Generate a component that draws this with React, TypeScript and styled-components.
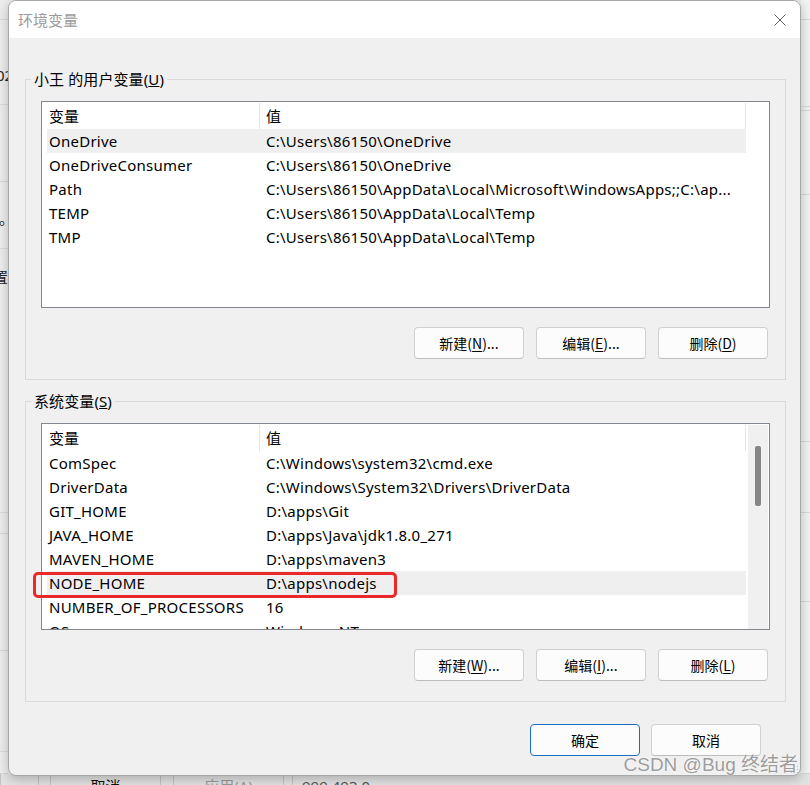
import styled, { createGlobalStyle } from "styled-components";

const GlobalStyle = createGlobalStyle`
  html, body {
    margin: 0;
    padding: 0;
  }
  body {
    width: 810px;
    height: 785px;
    overflow: hidden;
    background: #ececec;
    font-family: "Noto Sans", "Noto Sans CJK SC", sans-serif;
    color: #000;
  }
`;

const Desktop = styled.div`
  position: relative;
  width: 810px;
  height: 785px;
  overflow: hidden;
`;

/* ---------- window behind the dialog ---------- */

const BackWindow = styled.div`
  display: flex;
  flex-direction: column;
  width: 810px;
  height: 785px;
  background: #eeeeee;
`;

const BackTop = styled.div`
  display: flex;
  height: 774px;
  flex: none;
`;

const Strip = styled.div<{ $w: number; $bg: string }>`
  width: ${(p) => p.$w}px;
  flex: none;
  display: flex;
  flex-direction: column;
  background: ${(p) => p.$bg};
  overflow: hidden;
`;

const StripSeg = styled.div<{ $h: number }>`
  height: ${(p) => p.$h}px;
  flex: none;
  box-sizing: border-box;
  border-bottom: 1px solid #d9d9d9;
  white-space: nowrap;
  font-size: 15px;
  line-height: 20px;
  color: #222;
`;

const SegText = styled.div<{ $top: number; $left: number }>`
  padding-top: ${(p) => p.$top}px;
  margin-left: ${(p) => p.$left}px;
`;

const Filler = styled.div`
  flex: 1;
`;

const BackBottom = styled.div`
  display: flex;
  align-items: flex-start;
  height: 40px;
  flex: none;
  background: #e3e3e3;
  font-size: 15px;
  line-height: 20px;
`;

const BackCell = styled.div<{ $w: number; $color?: string }>`
  width: ${(p) => p.$w}px;
  flex: none;
  box-sizing: border-box;
  height: 40px;
  border-left: 1px solid #c4c4c4;
  text-align: center;
  padding-top: 2px;
  color: ${(p) => p.$color || "#111"};
`;

const BackGap = styled.div<{ $w: number }>`
  width: ${(p) => p.$w}px;
  flex: none;
  height: 40px;
  border-left: 1px solid #c4c4c4;
`;

const BackLabel = styled.div`
  padding: 2px 0 0 9px;
  color: #555;
  border-left: 1px solid #c4c4c4;
  height: 40px;
`;

/* ---------- the dialog ---------- */

const Dialog = styled.div`
  position: absolute;
  left: 8px;
  top: 0;
  width: 793px;
  height: 776px;
  box-sizing: border-box;
  border: 1px solid #a8a8a8;
  border-radius: 8px;
  background: #f0f0f0;
  box-shadow: 0 3px 12px rgba(0, 0, 0, 0.25);
  overflow: hidden;
  display: flex;
  flex-direction: column;
`;

const TitleBar = styled.div`
  height: 37px;
  flex: none;
  background: #fff;
  display: flex;
  align-items: center;
  justify-content: space-between;
  padding: 0 14px 0 9px;
`;

const Title = styled.div`
  font-family: "Noto Sans CJK SC", sans-serif;
  font-size: 15px;
  color: #9c9c9c;
`;

const Body = styled.div`
  flex: 1;
  display: flex;
  flex-direction: column;
  padding: 31px 14px 0 16px;
`;

const Group = styled.fieldset`
  margin: 0;
  padding: 12px 15px 20px 15px;
  border: 1px solid #d9d9d9;
  min-width: 0;
  & + & {
    margin-top: 11px;
  }
`;

const Legend = styled.legend`
  margin-left: -10px;
  padding: 0 3px;
  font-size: 15px;
  line-height: 20px;
  font-family: "Noto Sans", "Noto Sans CJK SC", sans-serif;
  letter-spacing: 0.1px;
`;

const List = styled.div`
  position: relative;
  height: 207px;
  box-sizing: border-box;
  border: 1px solid #828790;
  background: #fff;
  display: flex;
`;

const TableArea = styled.div`
  width: 704px;
  flex: none;
  overflow: hidden;
`;

const HeaderRow = styled.div`
  display: flex;
  height: 27px;
  font-size: 15px;
  line-height: 27px;
  font-family: "Noto Sans CJK SC", sans-serif;
`;

const HeaderCell = styled.div<{ $w: number; $pad: number }>`
  width: ${(p) => p.$w}px;
  flex: none;
  box-sizing: border-box;
  padding-left: ${(p) => p.$pad}px;
  position: relative;
  &::after {
    content: "";
    position: absolute;
    right: 0;
    top: 1px;
    bottom: 0;
    width: 1px;
    background: #e5e5e5;
  }
`;

const Row = styled.div<{ $selected?: boolean }>`
  display: flex;
  height: 24px;
  margin-left: 5px;
  font-size: 15px;
  line-height: 24px;
  letter-spacing: 0.25px;
  white-space: nowrap;
  background: ${(p) => (p.$selected ? "#efefef" : "transparent")};
`;

const Cell = styled.div<{ $w: number; $pad: number }>`
  width: ${(p) => p.$w}px;
  flex: none;
  box-sizing: border-box;
  padding-left: ${(p) => p.$pad}px;
  overflow: hidden;
`;

const ScrollTrack = styled.div<{ $show: boolean }>`
  width: 20px;
  margin: 1px 1px 0 2px;
  height: 204px;
  background: ${(p) => (p.$show ? "#f0f0f0" : "transparent")};
  display: flex;
  justify-content: center;
`;

const ScrollThumb = styled.div`
  width: 6px;
  height: 60px;
  margin-top: 21px;
  border-radius: 2px;
  background: #868686;
`;

const Marker = styled.div`
  position: absolute;
  left: -9px;
  top: 148px;
  width: 364px;
  height: 26px;
  box-sizing: border-box;
  border: 3px solid #ea2a2a;
  border-radius: 5px;
  pointer-events: none;
`;

const ButtonRow = styled.div<{ $gap: number; $right: number; $top: number }>`
  display: flex;
  justify-content: flex-end;
  gap: ${(p) => p.$gap}px;
  padding-right: ${(p) => p.$right}px;
  margin-top: ${(p) => p.$top}px;
`;

const Button = styled.button<{ $primary?: boolean }>`
  width: 110px;
  height: 32px;
  box-sizing: border-box;
  border: 1px solid ${(p) => (p.$primary ? "#1a6fc4" : "#d0d0d0")};
  border-bottom-color: ${(p) => (p.$primary ? "#1a6fc4" : "#bdbdbd")};
  border-radius: 4px;
  background: #fcfcfc;
  font-family: "Noto Sans CJK SC", sans-serif;
  font-size: 14px;
  color: #000;
  padding: 0;
  u {
    text-underline-offset: 2px;
  }
`;

const Watermark = styled.div`
  position: absolute;
  right: 12px;
  bottom: 9px;
  font-family: "Liberation Sans", "Noto Sans CJK SC", sans-serif;
  font-size: 19px;
  color: rgba(140, 140, 140, 0.85);
  text-shadow: 0 0 2px #fff;
  white-space: nowrap;
`;

const Grip = styled.svg`
  position: absolute;
  right: 1px;
  bottom: 1px;
`;

type Variable = { name: string; value: string };

const userVars: Variable[] = [
  { name: "OneDrive", value: "C:\\Users\\86150\\OneDrive" },
  { name: "OneDriveConsumer", value: "C:\\Users\\86150\\OneDrive" },
  {
    name: "Path",
    value: "C:\\Users\\86150\\AppData\\Local\\Microsoft\\WindowsApps;;C:\\ap...",
  },
  { name: "TEMP", value: "C:\\Users\\86150\\AppData\\Local\\Temp" },
  { name: "TMP", value: "C:\\Users\\86150\\AppData\\Local\\Temp" },
];

const systemVars: Variable[] = [
  { name: "ComSpec", value: "C:\\Windows\\system32\\cmd.exe" },
  { name: "DriverData", value: "C:\\Windows\\System32\\Drivers\\DriverData" },
  { name: "GIT_HOME", value: "D:\\apps\\Git" },
  { name: "JAVA_HOME", value: "D:\\apps\\Java\\jdk1.8.0_271" },
  { name: "MAVEN_HOME", value: "D:\\apps\\maven3" },
  { name: "NODE_HOME", value: "D:\\apps\\nodejs" },
  { name: "NUMBER_OF_PROCESSORS", value: "16" },
  { name: "OS", value: "Windows_NT" },
];

const leftSegs = [
  { h: 20 },
  { h: 85, text: "02", top: 45, left: -4 },
  { h: 77 },
  { h: 67, text: "。", top: 26, left: -1 },
  { h: 264, text: "配置", top: 18, left: -22 },
  { h: 21 },
  { h: 117 },
  { h: 101 },
  { h: 22 },
];

const rightSegs = [20, 87, 4, 84, 247, 71, 89, 172];

function VarList(props: {
  vars: Variable[];
  selected: number;
  scroll: boolean;
  marked?: boolean;
}) {
  return (
    <List>
      <TableArea>
        <HeaderRow>
          <HeaderCell $w={218} $pad={7}>
            变量
          </HeaderCell>
          <HeaderCell $w={486} $pad={6}>
            值
          </HeaderCell>
        </HeaderRow>
        {props.vars.map((v, index) => (
          <Row key={v.name} $selected={index === props.selected}>
            <Cell $w={212} $pad={2}>
              {v.name}
            </Cell>
            <Cell $w={487} $pad={7}>
              {v.value}
            </Cell>
          </Row>
        ))}
      </TableArea>
      <ScrollTrack $show={props.scroll}>
        {props.scroll ? <ScrollThumb /> : null}
      </ScrollTrack>
      {props.marked ? <Marker /> : null}
    </List>
  );
}

export default function App() {
  return (
    <Desktop>
      <GlobalStyle />
      <BackWindow>
        <BackTop>
          <Strip $w={8} $bg="#eeeeee">
            {leftSegs.map((s, index) => (
              <StripSeg key={index} $h={s.h}>
                {s.text ? (
                  <SegText $top={s.top || 0} $left={s.left || 0}>
                    {s.text}
                  </SegText>
                ) : null}
              </StripSeg>
            ))}
          </Strip>
          <Filler />
          <Strip $w={9} $bg="#f3f3f3">
            {rightSegs.map((h, index) => (
              <StripSeg key={index} $h={h} />
            ))}
          </Strip>
        </BackTop>
        <BackBottom>
          <BackGap $w={37} />
          <BackGap $w={11} />
          <BackCell $w={110}>取消</BackCell>
          <BackGap $w={12} />
          <BackCell $w={110} $color="#9a9a9a">
            应用(A)
          </BackCell>
          <BackGap $w={8} />
          <BackLabel>999.493.0</BackLabel>
        </BackBottom>
      </BackWindow>

      <Dialog>
        <TitleBar>
          <Title>环境变量</Title>
          <svg width="12" height="12" viewBox="0 0 12 12">
            <path d="M0.5 0.5 L11.5 11.5 M11.5 0.5 L0.5 11.5" stroke="#5a5a5a" strokeWidth="1" />
          </svg>
        </TitleBar>
        <Body>
          <Group>
            <Legend>
              小王 的用户变量(<u>U</u>)
            </Legend>
            <VarList vars={userVars} selected={0} scroll={false} />
            <ButtonRow $gap={12} $right={2} $top={19}>
              <Button>
                新建(<u>N</u>)...
              </Button>
              <Button>
                编辑(<u>E</u>)...
              </Button>
              <Button>
                删除(<u>D</u>)
              </Button>
            </ButtonRow>
          </Group>
          <Group>
            <Legend>
              系统变量(<u>S</u>)
            </Legend>
            <VarList vars={systemVars} selected={5} scroll={true} marked />
            <ButtonRow $gap={12} $right={2} $top={19}>
              <Button>
                新建(<u>W</u>)...
              </Button>
              <Button>
                编辑(<u>I</u>)...
              </Button>
              <Button>
                删除(<u>L</u>)
              </Button>
            </ButtonRow>
          </Group>
          <ButtonRow $gap={11} $right={25} $top={22}>
            <Button $primary>确定</Button>
            <Button>取消</Button>
          </ButtonRow>
        </Body>
        <Grip width="10" height="10" viewBox="0 0 10 10">
          <rect x="8" y="2" width="1" height="1" fill="#bbb" />
          <rect x="5" y="5" width="1" height="1" fill="#bbb" />
          <rect x="8" y="5" width="1" height="1" fill="#bbb" />
          <rect x="2" y="8" width="1" height="1" fill="#bbb" />
          <rect x="5" y="8" width="1" height="1" fill="#bbb" />
          <rect x="8" y="8" width="1" height="1" fill="#bbb" />
        </Grip>
      </Dialog>
      <Watermark>CSDN @Bug 终结者</Watermark>
    </Desktop>
  );
}
